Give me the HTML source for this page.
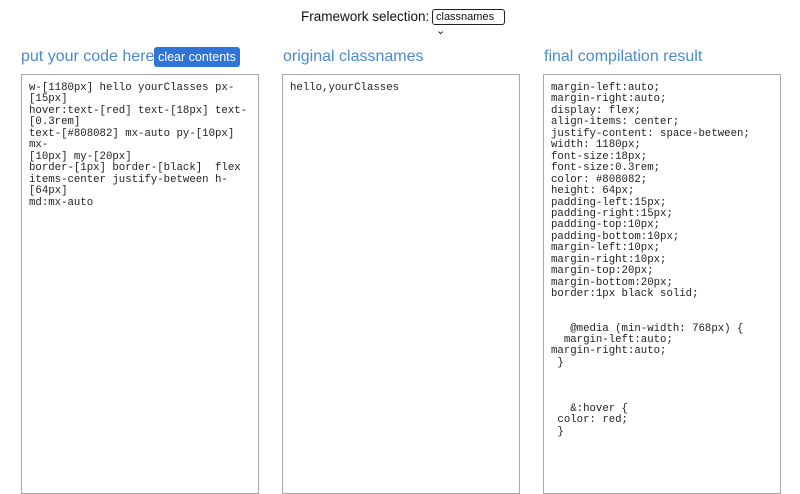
<!DOCTYPE html>
<html><head><meta charset="utf-8"><style>
body{margin:0;width:800px;height:481px;overflow:hidden;background:#fff;font-family:"Liberation Sans",sans-serif;position:relative}
.top{position:absolute;top:9px;left:301px;font-size:13.5px;color:#111}
.sel{position:absolute;top:9px;left:432px;width:68px;height:14px;border:1px solid #222;border-radius:3px;font-size:11px;line-height:14px;padding-left:3px;box-sizing:content-box;color:#111}
h2{position:absolute;margin:0;top:48px;font-weight:normal;font-size:16px;color:#4a8ad4}
.btn{position:absolute;left:154px;top:47px;width:86px;height:20px;background:#2f74d8;color:#fff;border-radius:3px;font-size:12.5px;line-height:20px;text-align:center}
.box{position:absolute;top:74px;width:238px;height:420px;border:1px solid #a8a8a8;box-sizing:border-box;padding:8px 7px;font-family:"Liberation Mono",monospace;font-size:10.7px;line-height:11.45px;color:#222;white-space:pre-wrap;word-break:break-word}
</style></head><body>
<div class="top">Framework selection:</div>
<div class="sel">classnames ⌄</div>
<h2 style="left:21px">put your code here</h2>
<div class="btn">clear contents</div>
<h2 style="left:283px">original classnames</h2>
<h2 style="left:544px">final compilation result</h2>
<div class="box" style="left:21px">w-[1180px] hello yourClasses px-[15px]
hover:text-[red] text-[18px] text-
[0.3rem]
text-[#808082] mx-auto py-[10px] mx-
[10px] my-[20px]
border-[1px] border-[black]  flex
items-center justify-between h-[64px]
md:mx-auto</div>
<div class="box" style="left:282px">hello,yourClasses</div>
<div class="box" style="left:543px">margin-left:auto;
margin-right:auto;
display: flex;
align-items: center;
justify-content: space-between;
width: 1180px;
font-size:18px;
font-size:0.3rem;
color: #808082;
height: 64px;
padding-left:15px;
padding-right:15px;
padding-top:10px;
padding-bottom:10px;
margin-left:10px;
margin-right:10px;
margin-top:20px;
margin-bottom:20px;
border:1px black solid;


   @media (min-width: 768px) {
  margin-left:auto;
margin-right:auto;
 }



   &amp;:hover {
 color: red;
 }</div>
</body></html>
